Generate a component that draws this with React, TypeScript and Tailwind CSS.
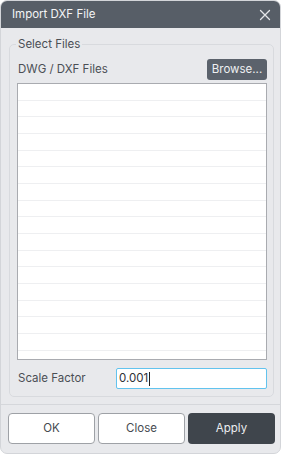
import React from "react";

export default function App() {
  const rows = Array.from({ length: 17 });
  return (
    <div className="w-[281px] h-[454px] bg-white" style={{ fontFamily: "Inter, 'Noto Sans', sans-serif" }}>
      <div className="w-[281px] h-[454px] rounded-[7px] border border-[#d3d5d9] bg-[#e8e9ec] overflow-hidden flex flex-col">
        <div className="h-[27px] bg-[#575e67] flex items-center justify-between pl-[11px] pr-[8px] shrink-0">
          <span className="text-[11.5px] text-[#f3f4f5]">Import DXF File</span>
          <svg width="12" height="12" viewBox="0 0 12 12" className="mr-[1px]">
            <path d="M1.5 1.5 L10.5 10.5 M10.5 1.5 L1.5 10.5" stroke="#e4e6e9" strokeWidth="1.3" strokeLinecap="round" />
          </svg>
        </div>
        <div className="pl-[8px] pt-[9px] h-[376px] shrink-0">
          <fieldset className="w-[265px] h-[360px] border border-[#d8dade] rounded-[5px] pl-[7px] pr-[6px] pt-[8px]">
            <legend className="-ml-[1px] px-[2px] text-[11.5px] leading-[14px] text-[#4b4f55]">Select Files</legend>
            <div className="flex items-center justify-between h-[21px]">
              <span className="text-[11.5px] text-[#4b4f55] pl-[1px]">DWG / DXF Files</span>
              <button className="h-[21px] w-[60px] rounded-[3px] bg-[#5b626c] text-[11.5px] text-[#eef0f2] flex items-center justify-center">
                Browse...
              </button>
            </div>
            <div className="mt-[3px] h-[277px] border border-[#a9abb0] bg-white overflow-hidden">
              {rows.map((_, i) => (
                <div key={i} className="h-[16.67px] border-b border-[#eeeff1]" />
              ))}
            </div>
            <div className="mt-[8px] flex items-center h-[21px]">
              <span className="w-[99px] text-[11.5px] text-[#4b4f55] pl-[1px]">Scale Factor</span>
              <div className="flex-1 h-[21px] border border-[#62c3ee] rounded-[2px] bg-white flex items-center pl-[2px] text-[11.5px] text-[#2e3136]">
                0.001<span className="inline-block w-[1px] h-[14px] bg-[#222] ml-[1px]" />
              </div>
            </div>
          </fieldset>
        </div>
        <div className="border-t border-[#d5d7db] flex-1 flex pl-[7px] pt-[8px] gap-[3px]">
          <button className="w-[87px] h-[31px] rounded-[4px] border border-[#9ea1a6] bg-white text-[11.5px] text-[#464a50]">OK</button>
          <button className="w-[87px] h-[31px] rounded-[4px] border border-[#9ea1a6] bg-white text-[11.5px] text-[#464a50]">Close</button>
          <button className="w-[87px] h-[31px] rounded-[4px] bg-[#3f454c] text-[11.5px] text-[#eceef0]">Apply</button>
        </div>
      </div>
    </div>
  );
}
